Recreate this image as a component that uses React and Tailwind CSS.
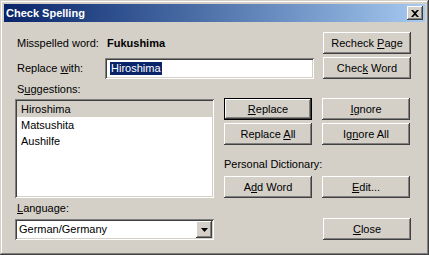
import React from "react";

const raised =
  "shadow-[inset_-1px_-1px_#404040,inset_1px_1px_#ffffff,inset_-2px_-2px_#808080,inset_2px_2px_#d4d0c8]";
const sunken =
  "shadow-[inset_1px_1px_#808080,inset_-1px_-1px_#ffffff,inset_2px_2px_#404040,inset_-2px_-2px_#d4d0c8]";

function Btn({ children, isDefault }) {
  if (isDefault) {
    return (
      <div className="w-[88px] h-[22px] shrink-0 border border-black bg-[#d4d0c8]">
        <div className={`w-full h-full flex items-center justify-center ${raised}`}>{children}</div>
      </div>
    );
  }
  return (
    <div className={`w-[88px] h-[22px] shrink-0 flex items-center justify-center bg-[#d4d0c8] ${raised}`}>
      {children}
    </div>
  );
}

function U({ children }) {
  return <span className="underline underline-offset-[1px] decoration-1">{children}</span>;
}

export default function App() {
  return (
    <div className="w-[429px] h-[255px] bg-[#d4d0c8] font-['Liberation_Sans',Arial,sans-serif] text-[11px] leading-[13px] text-black select-none">
      <div className="w-full h-full p-[4px] shadow-[inset_-1px_-1px_#404040,inset_1px_1px_#d4d0c8,inset_-2px_-2px_#808080,inset_2px_2px_#ffffff]">
        {/* title bar */}
        <div className="h-[18px] flex items-center bg-gradient-to-r from-[#0a246a] to-[#a6caf0] pl-[2px] pr-[2px]">
          <span className="text-white font-bold">Check Spelling</span>
          <div className={`ml-auto w-[16px] h-[14px] bg-[#d4d0c8] flex items-center justify-center ${raised}`}>
            <svg width="8" height="7" viewBox="0 0 8 7">
              <path d="M0 0h2l2 2 2-2h2L5 3.5 8 7H6L4 5 2 7H0l3-3.5z" fill="#000" />
            </svg>
          </div>
        </div>

        {/* body */}
        <div className="pl-[11px] pr-[14px] pt-[10px] flex flex-col">
          <div className="flex items-center h-[22px]">
            <span className="w-[90px] shrink-0 pl-[2px]">Misspelled word:</span>
            <span className="pl-[2px] font-bold">Fukushima</span>
            <div className="ml-auto">
              <Btn>
                <span>Recheck <U>P</U>age</span>
              </Btn>
            </div>
          </div>

          <div className="flex items-center h-[22px] mt-[3px]">
            <span className="w-[90px] shrink-0 pl-[2px]">
              Replace <U>w</U>ith:
            </span>
            <div className={`w-[209px] h-[21px] shrink-0 bg-white flex items-center pl-[5px] ${sunken}`}>
              <span className="bg-[#0a246a] text-white px-[1px]">Hiroshima</span>
            </div>
            <div className="ml-auto">
              <Btn>
                <span>Chec<U>k</U> Word</span>
              </Btn>
            </div>
          </div>

          <div className="mt-[4px] h-[13px] pl-[2px]">
            S<U>u</U>ggestions:
          </div>

          <div className="flex mt-[2px]">
            <div className={`w-[199px] h-[99px] shrink-0 mt-[1px] bg-white p-[2px] ${sunken}`}>
              <div className="h-[16px] flex items-center pl-[4px] bg-[#d4d0c8]">Hiroshima</div>
              <div className="h-[16px] flex items-center pl-[4px]">Matsushita</div>
              <div className="h-[16px] flex items-center pl-[4px]">Aushilfe</div>
            </div>

            <div className="ml-[10px] w-[88px] shrink-0 flex flex-col gap-[3px]">
              <Btn isDefault>
                <span><U>R</U>eplace</span>
              </Btn>
              <Btn>
                <span>Replace <U>A</U>ll</span>
              </Btn>
              <div className="h-[25px] pt-[10px] whitespace-nowrap">Personal Dictionary:</div>
              <Btn>
                <span>A<U>d</U>d Word</span>
              </Btn>
            </div>

            <div className="ml-[10px] w-[88px] shrink-0 flex flex-col gap-[3px]">
              <Btn>
                <span><U>I</U>gnore</span>
              </Btn>
              <Btn>
                <span>Ig<U>n</U>ore All</span>
              </Btn>
              <div className="h-[25px]" />
              <Btn>
                <span><U>E</U>dit...</span>
              </Btn>
            </div>
          </div>

          <div className="mt-[4px] h-[13px] pl-[2px]">
            <U>L</U>anguage:
          </div>

          <div className="flex items-start mt-[3px]">
            <div className={`w-[199px] h-[21px] shrink-0 mt-[1px] bg-white flex items-center p-[2px] ${sunken}`}>
              <span className="pl-[2px] flex-1">German/Germany</span>
              <div className={`w-[16px] h-[17px] bg-[#d4d0c8] flex items-center justify-center ${raised}`}>
                <svg width="7" height="4" viewBox="0 0 7 4">
                  <path d="M0 0h7L3.5 4z" fill="#000" />
                </svg>
              </div>
            </div>
            <div className="ml-auto">
              <Btn>
                <span><U>C</U>lose</span>
              </Btn>
            </div>
          </div>
        </div>
      </div>
    </div>
  );
}
